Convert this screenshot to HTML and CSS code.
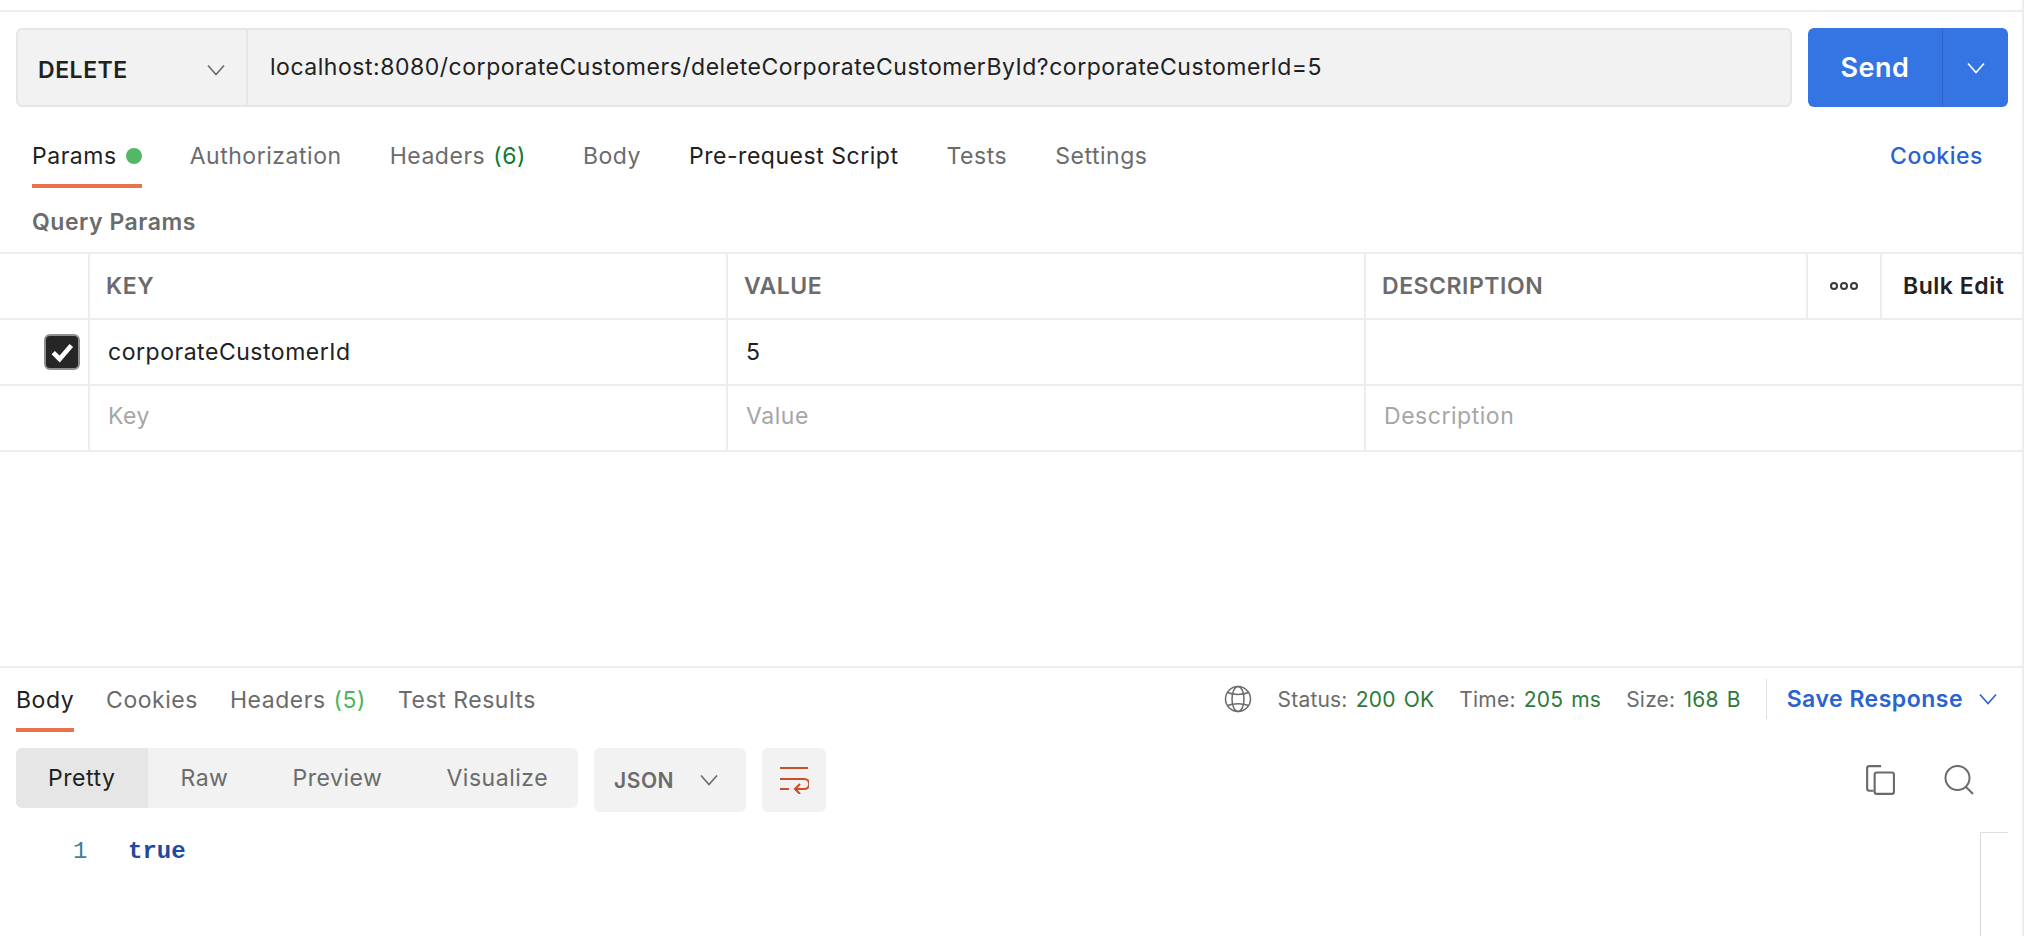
FILE: index.html
```html
<!DOCTYPE html>
<html lang="en">
<head>
  <meta charset="UTF-8" />
  <title>Postman - DELETE request</title>
  <link rel="stylesheet" href="styles.css">
</head>
<body>
  <div class="app">
    <div class="request-bar">
      <div class="url-box">
        <div class="method">
          <span>DELETE</span>
          <svg class="chev" viewBox="0 0 18 12"><path d="M1 1.5 9 10.5 17 1.5"/></svg>
        </div>
        <div class="url">localhost:8080/corporateCustomers/deleteCorporateCustomerById?corporateCustomerId=5</div>
      </div>
      <div class="send">
        <span class="send-label">Send</span>
        <span class="send-arrow"><svg class="chev" viewBox="0 0 18 12"><path d="M1 1.5 9 10.5 17 1.5"/></svg></span>
      </div>
    </div>

    <div class="req-tabs">
      <span class="tab active">Params <i class="dot"></i></span>
      <span class="tab">Authorization</span>
      <span class="tab tab-wide">Headers <em>(6)</em></span>
      <span class="tab">Body</span>
      <span class="tab dark">Pre-request Script</span>
      <span class="tab">Tests</span>
      <span class="tab">Settings</span>
      <span class="cookies">Cookies</span>
    </div>

    <div class="query-title">Query Params</div>

    <div class="params">
      <div class="row head">
        <div class="cell check"></div>
        <div class="cell">KEY</div>
        <div class="cell">VALUE</div>
        <div class="cell desc">DESCRIPTION</div>
        <div class="cell more"><svg viewBox="0 0 30 10"><circle cx="5" cy="5" r="3"/><circle cx="15" cy="5" r="3"/><circle cx="25" cy="5" r="3"/></svg></div>
        <div class="cell bulk">Bulk Edit</div>
      </div>
      <div class="row">
        <div class="cell check">
          <span class="box"><svg viewBox="0 0 24 24"><path d="M4.5 12.5 10 18 20 6.5"/></svg></span>
        </div>
        <div class="cell val">corporateCustomerId</div>
        <div class="cell val">5</div>
        <div class="cell wide"></div>
      </div>
      <div class="row">
        <div class="cell check"></div>
        <div class="cell val ph">Key</div>
        <div class="cell val ph">Value</div>
        <div class="cell val ph wide">Description</div>
      </div>
    </div>

    <div class="response">
      <div class="res-head">
        <span class="tab active">Body</span>
        <span class="tab">Cookies</span>
        <span class="tab">Headers <em class="light">(5)</em></span>
        <span class="tab">Test Results</span>
        <div class="res-meta">
          <svg class="globe" viewBox="0 0 28 28"><circle cx="14" cy="14" r="12.5"/><ellipse cx="14" cy="14" rx="6" ry="12.5"/><path d="M3.5 7.5C9 10 19 10 24.5 7.5M3.5 20.5C9 18 19 18 24.5 20.5"/></svg>
          <span class="stat">Status: <b>200 OK</b></span>
          <span class="stat">Time: <b>205 ms</b></span>
          <span class="stat">Size: <b>168 B</b></span>
          <span class="sep"></span>
          <span class="save">Save Response</span>
          <svg class="chev blue" viewBox="0 0 18 12"><path d="M1 1.5 9 10.5 17 1.5"/></svg>
        </div>
      </div>

      <div class="res-tools">
        <div class="modes">
          <span class="mode on">Pretty</span>
          <span class="mode">Raw</span>
          <span class="mode">Preview</span>
          <span class="mode">Visualize</span>
        </div>
        <div class="lang">
          <span>JSON</span>
          <svg class="chev" viewBox="0 0 18 12"><path d="M1 1.5 9 10.5 17 1.5"/></svg>
        </div>
        <div class="wrap-btn">
          <svg viewBox="0 0 30 28"><path d="M1 2H29M1 13H25C32 13 32 23 25 23H17M21 18 16 23 21 28M1 23H10"/></svg>
        </div>
        <div class="res-icons">
          <svg viewBox="0 0 28 28"><path d="M8 24H4A2 2 0 0 1 2 22V3A2 2 0 0 1 4 1H15"/><rect x="9" y="7" width="18" height="20" rx="2"/></svg>
          <svg viewBox="0 0 30 30"><circle cx="13.5" cy="13" r="12"/><path d="M22 22 29 29"/></svg>
        </div>
      </div>

      <div class="code">
        <span class="line-no">1</span>
        <span class="kw">true</span>
        <div class="minimap"></div>
      </div>
    </div>
  </div>
</body>
</html>
```

FILE: styles.css
```css
* {
  box-sizing: border-box;
}

html, body {
  margin: 0;
  height: 100%;
  background: #fff;
}

body {
  font-family: Inter, "Noto Sans", sans-serif;
  font-size: 23px;
  letter-spacing: .53px;
  color: #212121;
  overflow: hidden;
}

.app {
  width: 2024px;
  height: 936px;
  border-right: 2px solid #ededed;
  padding-top: 10px;
  display: flex;
  flex-direction: column;
}

svg {
  display: block;
  fill: none;
  stroke: currentColor;
}

.chev {
  width: 18px;
  height: 12px;
  stroke-width: 1.6;
  color: #6b6b6b;
}

/* request bar */
.request-bar {
  display: flex;
  gap: 16px;
  padding: 16px 14px 0 16px;
  border-top: 2px solid #ededed;
}

.url-box {
  flex: 1;
  height: 79px;
  display: flex;
  background: #f2f2f2;
  border: 2px solid #e6e6e6;
  border-radius: 6px;
}

.method {
  width: 230px;
  flex: none;
  display: flex;
  align-items: center;
  justify-content: space-between;
  padding: 4px 21px 0 20px;
  border-right: 2px solid #e6e6e6;
  font-weight: 600;
}

.url {
  flex: 1;
  display: flex;
  align-items: center;
  padding-left: 22px;
  padding-bottom: 2px;
}

.send {
  width: 200px;
  height: 79px;
  display: flex;
  background: #3574e3;
  color: #fff;
  border-radius: 6px;
  font-size: 27px;
  font-weight: 600;
}

.send-label {
  flex: 1;
  display: flex;
  align-items: center;
  justify-content: center;
  border-right: 1px solid #2a64cc;
}

.send-arrow {
  width: 65px;
  display: flex;
  align-items: center;
  justify-content: center;
}

.send-arrow .chev {
  color: #fff;
}

/* tabs */
.req-tabs {
  display: flex;
  gap: 48px;
  height: 81px;
  padding: 0 32px;
  align-items: flex-start;
}

.tab {
  display: flex;
  align-items: center;
  height: 81px;
  padding-top: 21px;
  border-bottom: 4px solid transparent;
  color: #6b6b6b;
  white-space: pre;
}

.tab.active {
  color: #212121;
  border-bottom-color: #e9724a;
}

.tab.dark {
  color: #212121;
}

.tab-wide {
  margin-right: 9px;
}

.tab em {
  margin-left: 1px;
  font-style: normal;
  color: #0e7a2f;
}

.tab em.light {
  color: #4db35e;
}

.dot {
  width: 16px;
  height: 16px;
  margin-left: 2px;
  border-radius: 50%;
  background: #52b865;
}

.cookies {
  margin-left: auto;
  margin-right: 7px;
  padding-top: 21px;
  height: 81px;
  display: flex;
  align-items: center;
  padding-bottom: 4px;
  color: #2a62d0;
  font-weight: 500;
}

.query-title {
  height: 64px;
  padding: 3px 32px 0;
  display: flex;
  align-items: center;
  color: #6b6b6b;
  font-weight: 600;
}

/* params table */
.params {
  border-top: 2px solid #ededed;
}

.row {
  display: grid;
  grid-template-columns: 90px 638px 638px 442px 74px 1fr;
  height: 66px;
  border-bottom: 2px solid #ededed;
}

.cell {
  display: flex;
  align-items: center;
  padding-left: 16px;
  border-right: 2px solid #ededed;
  white-space: nowrap;
}

.cell:last-child {
  border-right: none;
}

.cell.wide {
  grid-column: 4 / 7;
}

.head .cell {
  color: #6b6b6b;
  font-weight: 600;
}

.head .cell.bulk {
  color: #212121;
  padding-left: 21px;
}

.head .cell.more {
  justify-content: center;
  padding-left: 0;
  color: #3a3a3a;
}

.more svg {
  width: 30px;
  height: 10px;
  stroke-width: 2;
}

.cell.check {
  padding: 0 8px 0 0;
  justify-content: flex-end;
}

.cell.val {
  padding-left: 18px;
}

.cell.ph {
  padding-bottom: 4px;
  color: #a6a6a6;
}

.box {
  width: 36px;
  height: 36px;
  background: #262626;
  border: 2px solid #8f8f8f;
  border-radius: 6px;
  display: flex;
  align-items: center;
  justify-content: center;
  color: #fff;
}

.box svg {
  width: 28px;
  height: 28px;
  stroke-width: 4;
}

/* response pane */
.response {
  margin-top: 214px;
  flex: 1;
  border-top: 2px solid #ededed;
  display: flex;
  flex-direction: column;
}

.res-head {
  display: flex;
  gap: 32px;
  height: 64px;
  padding: 0 16px;
  align-items: flex-start;
}

.res-head .tab {
  height: 64px;
  padding-top: 3px;
}

.res-meta {
  margin-left: auto;
  display: flex;
  align-items: center;
  height: 62px;
  font-size: 21px;
  letter-spacing: .2px;
  word-spacing: 2px;
  color: #6b6b6b;
}

.globe {
  width: 28px;
  height: 28px;
  stroke-width: 1.5;
  margin-right: 26px;
}

.stat {
  margin-right: 25px;
}

.stat b {
  font-weight: 400;
  color: #2c7a3a;
}

.sep {
  width: 1px;
  height: 40px;
  background: #e0e0e0;
  margin-right: 20px;
}

.save {
  color: #2a62d0;
  font-weight: 600;
  font-size: 23px;
  letter-spacing: .5px;
  word-spacing: 0;
  margin-right: 16px;
}

.res-meta .chev.blue {
  color: #2a62d0;
  margin-right: 9px;
}

.res-tools {
  display: flex;
  gap: 16px;
  margin-top: 16px;
  padding: 0 16px;
  align-items: flex-start;
}

.modes {
  display: flex;
  height: 60px;
  width: 562px;
  background: #f2f2f2;
  border-radius: 6px;
  overflow: hidden;
  color: #6b6b6b;
}

.mode {
  display: flex;
  align-items: center;
  padding: 0 32px 1px;
}

.mode.on {
  padding-right: 33px;
  background: #e6e6e6;
  color: #212121;
}

.lang {
  width: 152px;
  height: 64px;
  display: flex;
  align-items: center;
  justify-content: space-between;
  padding: 0 28px 0 20px;
  background: #f2f2f2;
  border-radius: 6px;
  color: #6b6b6b;
  font-weight: 600;
  font-size: 21px;
}

.wrap-btn {
  width: 64px;
  height: 64px;
  background: #f2f2f2;
  border-radius: 6px;
  color: #c8502a;
  display: flex;
  align-items: center;
  justify-content: center;
}

.wrap-btn svg {
  width: 30px;
  height: 28px;
  stroke-width: 2.2;
}

.res-icons {
  margin-left: auto;
  display: flex;
  gap: 49px;
  padding: 17px 32px 0 0;
  color: #6b6b6b;
}

.res-icons svg {
  width: 30px;
  height: 30px;
  stroke-width: 2;
}

.code {
  flex: 1;
  display: flex;
  padding-left: 73px;
  margin-top: 20px;
  font-family: "Liberation Mono", monospace;
  letter-spacing: 0;
}

.line-no {
  width: 55px;
  color: #3f7f9a;
  font-size: 24px;
  padding-top: 6px;
}

.kw {
  font-weight: 700;
  font-size: 24px;
  color: #1f4a9e;
  padding-top: 6px;
}

.minimap {
  margin-left: auto;
  margin-right: 14px;
  width: 28px;
  border-left: 1px solid #d8d8d8;
  border-top: 1px solid #e0e0e0;
}
```
